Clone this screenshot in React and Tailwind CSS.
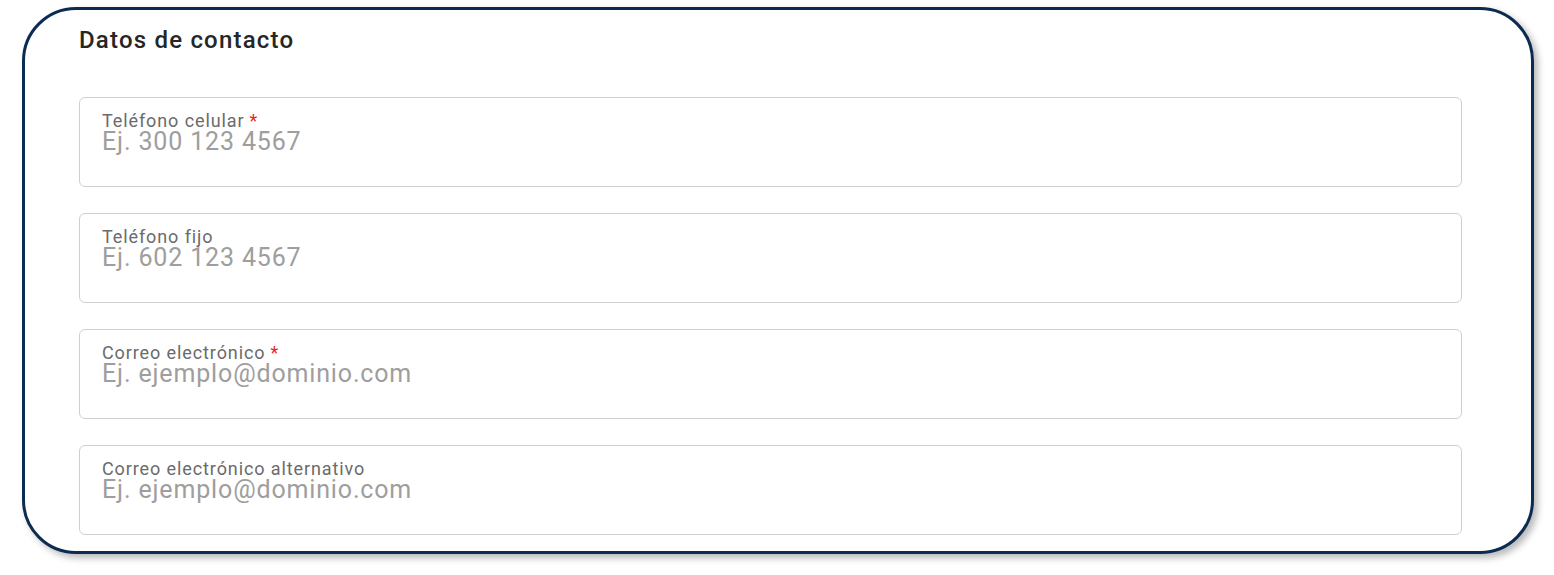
import React from "react";

const fields = [
  { label: "Teléfono celular", required: true, placeholder: "Ej. 300 123 4567" },
  { label: "Teléfono fijo", required: false, placeholder: "Ej. 602 123 4567" },
  { label: "Correo electrónico", required: true, placeholder: "Ej. ejemplo@dominio.com" },
  { label: "Correo electrónico alternativo", required: false, placeholder: "Ej. ejemplo@dominio.com" },
];

function Field({ label, required, placeholder }) {
  return (
    <div className="h-[90px] w-[1383px] rounded-[6px] border border-[#cfcfcf] bg-white pl-[22px] pt-[13px]">
      <div className="flex items-start text-[18px] leading-[20px] tracking-[0.9px] text-[#6b6b6b]">
        <span>{label}</span>
        {required && <span className="ml-[5px] text-[#e8262a]">*</span>}
      </div>
      <input
        className="mt-[-3px] block w-full bg-transparent p-0 text-[25px] leading-[28px] tracking-[0.85px] text-[#333] placeholder:text-[#9e9e9e] outline-none"
        style={{ fontFamily: "Roboto, 'Noto Sans', sans-serif" }}
        placeholder={placeholder}
      />
    </div>
  );
}

export default function App() {
  return (
    <div className="min-h-[575px] bg-white pl-[22px] pt-[7px]" style={{ fontFamily: "Roboto, 'Noto Sans', sans-serif" }}>
      <div className="h-[547px] w-[1512px] rounded-[54px] border-[3px] border-[#0b2b52] bg-white pl-[54px] pt-[16px] shadow-[4px_4px_7px_rgba(0,0,0,0.28)]">
        <h2 className="text-[24px] font-medium leading-[28px] tracking-[1.2px] text-[#262626]">Datos de contacto</h2>
        <div className="mt-[43px] flex flex-col gap-[26px]">
          {fields.map((f) => (
            <Field key={f.label} {...f} />
          ))}
        </div>
      </div>
    </div>
  );
}
